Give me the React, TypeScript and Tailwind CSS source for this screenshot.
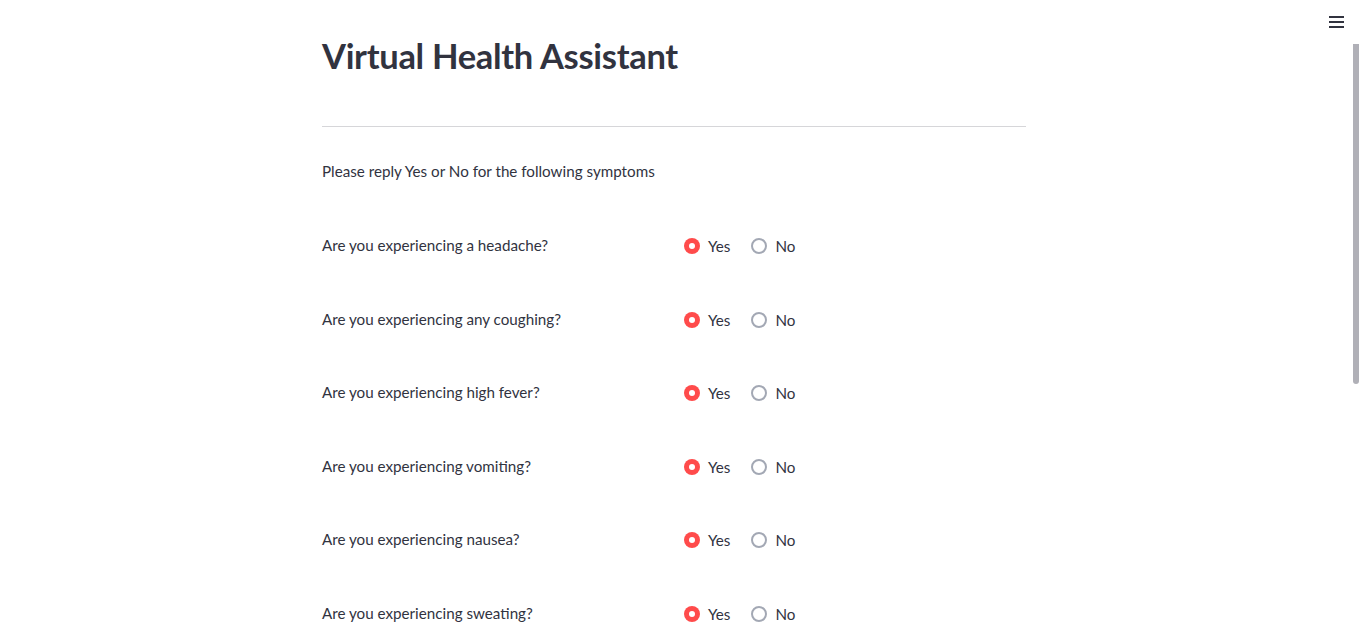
const questions = [
  "Are you experiencing a headache?",
  "Are you experiencing any coughing?",
  "Are you experiencing high fever?",
  "Are you experiencing vomiting?",
  "Are you experiencing nausea?",
  "Are you experiencing sweating?",
];

function Radio({ checked, label }: { checked: boolean; label: string }) {
  return (
    <label className="flex items-center gap-[8px]">
      {checked ? (
        <span className="grid h-4 w-4 place-items-center rounded-full bg-[#ff4b4b]">
          <span className="h-[6px] w-[6px] rounded-full bg-white" />
        </span>
      ) : (
        <span className="h-4 w-4 rounded-full border-2 border-[#a3a8b4] bg-white" />
      )}
      <span>{label}</span>
    </label>
  );
}

export default function App() {
  return (
    <div
      className="relative h-[632px] overflow-hidden bg-white pr-[12px] text-[#31333f]"
      style={{ fontFamily: "Lato, 'Open Sans', sans-serif" }}
    >
      <button className="absolute right-[16px] top-[16px] flex flex-col gap-[3px]" aria-label="menu">
        <span className="h-[2px] w-[15px] bg-[#31333f]" />
        <span className="h-[2px] w-[15px] bg-[#31333f]" />
        <span className="h-[2px] w-[15px] bg-[#31333f]" />
      </button>
      <div className="absolute right-[1px] top-[44px] h-[340px] w-[6px] rounded-b-[3px] bg-[#b0b0b7]" />

      <main className="mx-auto w-[704px] pt-[34px] text-[15.2px]">
        <h1 className="text-[34.5px] font-bold leading-[44px] tracking-[-0.3px]">Virtual Health Assistant</h1>
        <hr className="mt-[48px] border-[#d6d6d9]" />
        <p className="mt-[32px] leading-[24px]">Please reply Yes or No for the following symptoms</p>

        <div className="mt-[50px] flex flex-col">
          {questions.map((q) => (
            <div key={q} className="flex h-[73.6px] items-start">
              <div className="w-[360px] shrink-0 leading-[24px]">{q}</div>
              <div className="mt-[1px] flex items-center gap-[21px] pl-[2px] leading-[24px]">
                <Radio checked label="Yes" />
                <Radio checked={false} label="No" />
              </div>
            </div>
          ))}
        </div>
      </main>
    </div>
  );
}
